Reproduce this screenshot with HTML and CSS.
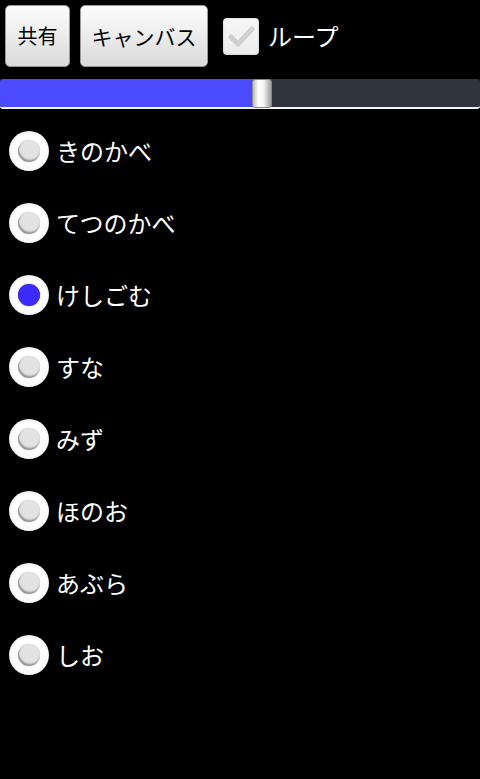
FILE: index.html
```html
<!DOCTYPE html>
<html lang="ja">
<head>
<meta charset="utf-8">
<link rel="stylesheet" href="styles.css">
</head>
<body>
<div class="toolbar">
  <button class="btn btn-share">共有</button>
  <button class="btn btn-canvas">キャンバス</button>
  <label class="check">
    <span class="box"><svg viewBox="0 0 36 36" width="36" height="36"><path d="M8 19 L15 26 L29 11" fill="none" stroke="#cfcfcf" stroke-width="5" stroke-linecap="round" stroke-linejoin="round"/></svg></span>
    <span class="check-label">ループ</span>
  </label>
</div>
<div class="slider">
  <div class="fill"></div>
  <div class="thumb"></div>
</div>
<ul class="radios">
  <li class="row"><span class="radio"><span class="dot"></span></span><span class="lbl">きのかべ</span></li>
  <li class="row"><span class="radio"><span class="dot"></span></span><span class="lbl">てつのかべ</span></li>
  <li class="row"><span class="radio"><span class="dot on"></span></span><span class="lbl">けしごむ</span></li>
  <li class="row"><span class="radio"><span class="dot"></span></span><span class="lbl">すな</span></li>
  <li class="row"><span class="radio"><span class="dot"></span></span><span class="lbl">みず</span></li>
  <li class="row"><span class="radio"><span class="dot"></span></span><span class="lbl">ほのお</span></li>
  <li class="row"><span class="radio"><span class="dot"></span></span><span class="lbl">あぶら</span></li>
  <li class="row"><span class="radio"><span class="dot"></span></span><span class="lbl">しお</span></li>
</ul>
</body>
</html>
```
FILE: styles.css
```css
html, body {
  margin: 0;
  padding: 0;
  background: #000;
  width: 480px;
  height: 779px;
  overflow: hidden;
  font-family: "Noto Sans CJK JP", "Noto Sans", sans-serif;
}
.toolbar {
  display: flex;
  align-items: center;
  padding: 5px 0 0 5px;
  height: 62px;
}
.btn {
  height: 62px;
  border: 1px solid #9a9a9a;
  border-radius: 5px;
  background: linear-gradient(#fbfbfb, #f0f0f0 40%, #d9d9d9);
  color: #000;
  font-family: "Noto Sans CJK JP", sans-serif;
  font-size: 20px;
  padding: 0;
  margin: 0;
  line-height: 1;
}
.btn-canvas { font-size: 21px; }
.btn-share { width: 65px; }
.btn-canvas { width: 128px; margin-left: 10px; }
.check {
  display: flex;
  align-items: center;
  margin-left: 15px;
}
.box {
  width: 36px;
  height: 37px;
  border-radius: 4px;
  background: linear-gradient(#f6f6f6, #ececec);
  box-shadow: inset 0 0 2px rgba(0,0,0,0.25);
  display: flex;
  align-items: center;
  justify-content: center;
}
.check-label {
  color: #fff;
  font-size: 24px;
  margin-left: 9px;
  line-height: 1;
}
.slider {
  position: relative;
  margin-top: 12px;
  height: 28px;
  background: #2f333b;
  border-radius: 3px;
  border-bottom: 2px solid #f4f4f4;
}
.fill {
  width: 254px;
  height: 100%;
  background: #4a4aff;
  border-radius: 3px 0 0 3px;
}
.thumb {
  position: absolute;
  left: 252px;
  top: 0;
  width: 20px;
  height: 29px;
  border-radius: 3px;
  background: linear-gradient(90deg, #bdbdbd, #ffffff 30%, #f2f2f2 60%, #9c9c9c);
  border: 1px solid #8a8a8a;
  box-sizing: border-box;
}
.radios {
  list-style: none;
  margin: 6px 0 0 0;
  padding: 0;
}
.row {
  height: 72px;
  display: flex;
  align-items: center;
}
.radio {
  width: 40px;
  height: 40px;
  margin-left: 9px;
  border-radius: 50%;
  background: radial-gradient(circle, #fff 0, #fff 58%, #ededed 76%, #b0b0b0 92%, rgba(0,0,0,0) 100%);
  display: flex;
  align-items: center;
  justify-content: center;
}
.dot {
  width: 22px;
  height: 22px;
  border-radius: 50%;
  background: #e2e2e2;
  box-shadow: inset 1px -2px 2px rgba(0,0,0,0.35), 0 0 1px #bbb;
}
.dot.on {
  background: #3b2bff;
  box-shadow: 0 0 1px #555;
}
.lbl {
  color: #fff;
  font-size: 24px;
  margin-left: 7px;
  line-height: 1;
}
```
